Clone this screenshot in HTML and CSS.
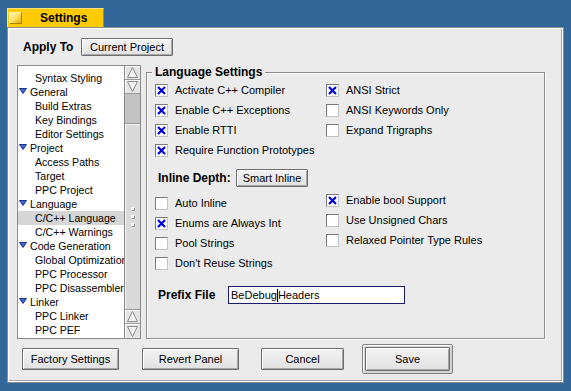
FILE: index.html
```html
<!DOCTYPE html>
<html>
<head>
<meta charset="utf-8">
<link rel="stylesheet" href="styles.css">
</head>
<body>
<div class="desk">
  <div class="tab">
    <span class="tab-icon"></span>
    <span class="tab-title">Settings</span>
  </div>
  <div class="window">
    <div class="apply-row">
      <span class="apply-label">Apply To</span>
      <button class="btn btn-project">Current Project</button>
    </div>
    <div class="main">
      <div class="tree">
        <div class="tree-list">
          <div class="row sub">Syntax Styling</div>
          <div class="row grp"><svg class="tri" width="8" height="6" viewBox="0 0 8 6"><polygon points="0.5,0.5 7.5,0.5 4,5.5" /></svg>General</div>
          <div class="row sub">Build Extras</div>
          <div class="row sub">Key Bindings</div>
          <div class="row sub">Editor Settings</div>
          <div class="row grp"><svg class="tri" width="8" height="6" viewBox="0 0 8 6"><polygon points="0.5,0.5 7.5,0.5 4,5.5" /></svg>Project</div>
          <div class="row sub">Access Paths</div>
          <div class="row sub">Target</div>
          <div class="row sub">PPC Project</div>
          <div class="row grp"><svg class="tri" width="8" height="6" viewBox="0 0 8 6"><polygon points="0.5,0.5 7.5,0.5 4,5.5" /></svg>Language</div>
          <div class="row sub selected">C/C++ Language</div>
          <div class="row sub">C/C++ Warnings</div>
          <div class="row grp"><svg class="tri" width="8" height="6" viewBox="0 0 8 6"><polygon points="0.5,0.5 7.5,0.5 4,5.5" /></svg>Code Generation</div>
          <div class="row sub">Global Optimizations</div>
          <div class="row sub">PPC Processor</div>
          <div class="row sub">PPC Disassembler</div>
          <div class="row grp"><svg class="tri" width="8" height="6" viewBox="0 0 8 6"><polygon points="0.5,0.5 7.5,0.5 4,5.5" /></svg>Linker</div>
          <div class="row sub">PPC Linker</div>
          <div class="row sub">PPC PEF</div>
        </div>
        <div class="scrollbar">
          <div class="arrow"><svg width="15" height="13" viewBox="0 0 15 13"><polygon points="7.5,1.5 12.5,11.5 2.5,11.5" /></svg></div>
          <div class="arrow"><svg width="15" height="13" viewBox="0 0 15 13"><polygon points="2.5,1.5 12.5,1.5 7.5,11.5" /></svg></div>
          <div class="track"></div>
          <div class="thumb"><span class="grip"></span><span class="grip"></span><span class="grip"></span></div>
          <div class="arrow"><svg width="15" height="13" viewBox="0 0 15 13"><polygon points="7.5,1.5 12.5,11.5 2.5,11.5" /></svg></div>
          <div class="arrow last"><svg width="15" height="13" viewBox="0 0 15 13"><polygon points="2.5,1.5 12.5,1.5 7.5,11.5" /></svg></div>
        </div>
      </div>
      <div class="group">
        <div class="group-title">Language Settings</div>
        <div class="cols sec1">
          <div class="col col1">
            <div class="cb-row"><span class="cb on"><svg width="11" height="11" viewBox="0 0 11 11"><path d="M2 2 L9 9 M9 2 L2 9" /></svg></span>Activate C++ Compiler</div>
            <div class="cb-row"><span class="cb on"><svg width="11" height="11" viewBox="0 0 11 11"><path d="M2 2 L9 9 M9 2 L2 9" /></svg></span>Enable C++ Exceptions</div>
            <div class="cb-row"><span class="cb on"><svg width="11" height="11" viewBox="0 0 11 11"><path d="M2 2 L9 9 M9 2 L2 9" /></svg></span>Enable RTTI</div>
            <div class="cb-row"><span class="cb on"><svg width="11" height="11" viewBox="0 0 11 11"><path d="M2 2 L9 9 M9 2 L2 9" /></svg></span>Require Function Prototypes</div>
          </div>
          <div class="col col2">
            <div class="cb-row"><span class="cb on"><svg width="11" height="11" viewBox="0 0 11 11"><path d="M2 2 L9 9 M9 2 L2 9" /></svg></span>ANSI Strict</div>
            <div class="cb-row"><span class="cb"></span>ANSI Keywords Only</div>
            <div class="cb-row"><span class="cb"></span>Expand Trigraphs</div>
          </div>
        </div>
        <div class="inline-row">
          <span class="inline-label">Inline Depth:</span>
          <button class="btn btn-inline">Smart Inline</button>
        </div>
        <div class="cols sec2">
          <div class="col col1 c1b">
            <div class="cb-row"><span class="cb"></span>Auto Inline</div>
            <div class="cb-row"><span class="cb on"><svg width="11" height="11" viewBox="0 0 11 11"><path d="M2 2 L9 9 M9 2 L2 9" /></svg></span>Enums are Always Int</div>
            <div class="cb-row"><span class="cb"></span>Pool Strings</div>
            <div class="cb-row"><span class="cb"></span>Don't Reuse Strings</div>
          </div>
          <div class="col col2 c2b">
            <div class="cb-row"><span class="cb on"><svg width="11" height="11" viewBox="0 0 11 11"><path d="M2 2 L9 9 M9 2 L2 9" /></svg></span>Enable bool Support</div>
            <div class="cb-row"><span class="cb"></span>Use Unsigned Chars</div>
            <div class="cb-row"><span class="cb"></span>Relaxed Pointer Type Rules</div>
          </div>
        </div>
        <div class="prefix-row">
          <span class="prefix-label">Prefix File</span>
          <div class="field"><span>BeDebug</span><span class="caret"></span><span>Headers</span></div>
        </div>
      </div>
    </div>
    <div class="bottom">
      <button class="btn btn-factory">Factory Settings</button>
      <button class="btn btn-revert">Revert Panel</button>
      <button class="btn btn-cancel">Cancel</button>
      <div class="default-frame"><button class="btn btn-save">Save</button></div>
    </div>
  </div>
</div>
</body>
</html>
```

FILE: styles.css
```css
* { box-sizing: border-box; }

body {
  margin: 0;
  width: 571px;
  height: 391px;
  overflow: hidden;
  background: #336699;
  font-family: "Liberation Sans", Arial, sans-serif;
  font-size: 11px;
  color: #000;
}

.desk {
  padding: 8px 0 0 7px;
}

.tab {
  width: 97px;
  height: 19px;
  display: flex;
  align-items: center;
  background: #ffcb00;
  border-top: 1px solid #ffe27a;
  border-left: 1px solid #ffe27a;
  border-right: 1px solid #b38f00;
}

.tab-icon {
  width: 13px;
  height: 12px;
  margin-left: 1px;
  background: linear-gradient(135deg, #fff6c0 0%, #ffe060 50%, #e0aa00 100%);
  border: 1px solid;
  border-color: #fff3b0 #a88400 #a88400 #fff3b0;
}

.tab-title {
  margin-left: 18px;
  font-weight: bold;
  font-size: 12px;
}

.window {
  width: 557px;
  height: 356px;
  background: #ebebeb;
  border: 1px solid #8d8d8d;
  padding: 1px;
  box-shadow: inset 1px 1px 0 #ffffff, inset -1px -1px 0 #ffffff, inset -3px -3px 0 -1px #a5a5a5;
}

.apply-row {
  display: flex;
  align-items: center;
  height: 18px;
  margin-top: 9px;
  padding-left: 14px;
}

.apply-label {
  width: 58px;
  font-weight: bold;
  font-size: 12px;
}

.btn {
  font-family: "Liberation Sans", Arial, sans-serif;
  font-size: 11px;
  color: #000;
  padding: 0;
  margin: 0;
  background: linear-gradient(#f2f2f2, #e2e2e2);
  border: 1px solid #6e6e6e;
  border-radius: 1px;
  box-shadow: inset 1px 1px 0 #ffffff, inset -1px -1px 0 #a6a6a6;
}

.btn-project { width: 92px; height: 18px; }

.main {
  display: flex;
  align-items: flex-start;
  gap: 5px;
  height: 274px;
  margin-top: 9px;
  padding-left: 8px;
}

.tree {
  display: flex;
  width: 124px;
  height: 274px;
  background: #fff;
  border: 1px solid #8a8a8a;
}

.tree-list {
  width: 106px;
  padding-top: 5px;
  overflow: hidden;
  font-size: 10.6px;
}

.row {
  height: 14px;
  line-height: 14px;
  white-space: nowrap;
  display: flex;
  align-items: center;
}

.row.sub { padding-left: 17px; }
.row.grp { padding-left: 1px; }
.row.selected { background: #d6d6d6; }

.tri {
  margin-right: 3px;
  margin-top: -2px;
  flex: none;
}
.tri polygon {
  fill: #3f63d6;
  stroke: #1f348c;
  stroke-width: 1;
}

.scrollbar {
  width: 16px;
  display: flex;
  flex-direction: column;
  border-left: 1px solid #8a8a8a;
  background: #bfbfbf;
}

.arrow {
  height: 14px;
  flex: none;
  background: #e4e4e4;
  border-bottom: 1px solid #9a9a9a;
  box-shadow: inset 1px 1px 0 #fff;
  display: flex;
  align-items: center;
  justify-content: center;
}
.arrow.last { border-bottom: none; }
.arrow polygon {
  fill: #f2f2f2;
  stroke: #8c8c8c;
  stroke-width: 1;
}

.track {
  height: 29px;
  flex: none;
  background: #c2c2c2;
}

.thumb {
  flex: 1;
  background: #dadada;
  border-top: 1px solid #9a9a9a;
  border-bottom: 1px solid #9a9a9a;
  box-shadow: inset 1px 1px 0 #f4f4f4;
  display: flex;
  flex-direction: column;
  align-items: center;
  justify-content: center;
  gap: 5px;
}

.grip {
  width: 3px;
  height: 3px;
  background: #f6f6f6;
  box-shadow: 1px 1px 0 #9c9c9c;
}

.group {
  width: 399px;
  height: 267px;
  margin-top: 7px;
  border: 1px solid #8c8c8c;
  box-shadow: 1px 1px 0 #fff, inset 1px 1px 0 #fff;
  padding-left: 8px;
  display: flex;
  flex-direction: column;
}

.group-title {
  align-self: flex-start;
  margin-top: -8px;
  margin-left: -3px;
  padding: 0 3px;
  line-height: 14px;
  font-weight: bold;
  font-size: 12px;
  background: #ebebeb;
}

.cols {
  display: flex;
}

.sec1 { margin-top: 1px; }

.col1 { width: 171px; }

.c1b { padding-top: 6px; }
.c2b { padding-top: 3px; }

.cb-row {
  height: 20px;
  display: flex;
  align-items: center;
  white-space: nowrap;
}

.cb {
  width: 13px;
  height: 13px;
  flex: none;
  margin-right: 7px;
  background: #fff;
  border: 1px solid;
  border-color: #7a7a7a #c4c4c4 #c4c4c4 #7a7a7a;
  display: flex;
  align-items: center;
  justify-content: center;
}

.cb path {
  stroke: #0000d8;
  stroke-width: 2.2;
  fill: none;
}

.inline-row {
  display: flex;
  align-items: center;
  height: 18px;
  margin-top: 9px;
  padding-left: 3px;
}

.inline-label {
  width: 78px;
  font-weight: bold;
  font-size: 12px;
}

.btn-inline { width: 72px; height: 18px; }

.prefix-row {
  display: flex;
  align-items: center;
  height: 18px;
  margin-top: 13px;
  padding-left: 3px;
}

.prefix-label {
  width: 70px;
  font-weight: bold;
  font-size: 12px;
}

.field {
  width: 177px;
  height: 18px;
  background: #fff;
  border: 1px solid #1a1a6e;
  padding-left: 2px;
  display: flex;
  align-items: center;
  white-space: nowrap;
}

.caret {
  width: 1px;
  height: 13px;
  background: #000;
}

.bottom {
  display: flex;
  align-items: center;
  height: 30px;
  margin-top: 5px;
  padding-left: 13px;
}

.btn-factory { width: 97px; height: 22px; margin-right: 23px; }
.btn-revert { width: 97px; height: 22px; margin-right: 22px; }
.btn-cancel { width: 83px; height: 22px; margin-right: 18px; }

.default-frame {
  width: 91px;
  height: 30px;
  padding: 2px;
  border: 1px solid #808080;
  border-radius: 2px;
  background: #d4d4d4;
  box-shadow: inset 1px 1px 0 #fff;
}

.btn-save { width: 85px; height: 24px; }
```
